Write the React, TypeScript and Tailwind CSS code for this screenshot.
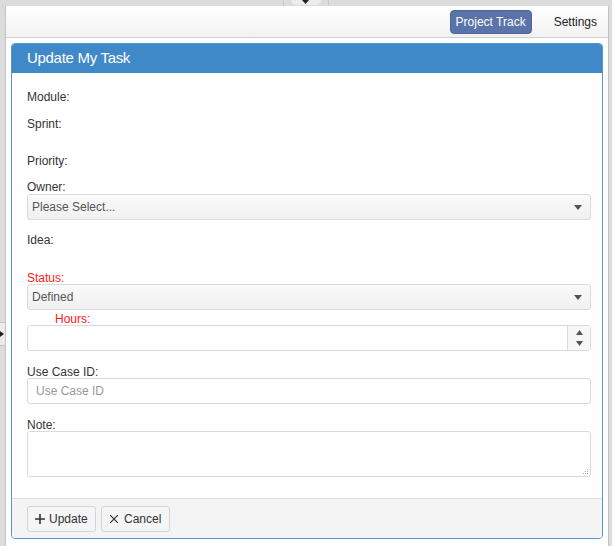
import React from 'react';

const Caret = () => (
    <svg width="8" height="5" viewBox="0 0 8 5" className="fill-[#4a5563]">
        <path d="M0 0h8L4 5z" />
    </svg>
);

const SelectBox = ({ value }: { value: string }) => (
    <div className="h-[26px] flex items-center justify-between pl-[4px] pr-[8px] border border-[#dadada] rounded-[3px] bg-gradient-to-b from-[#fafafa] to-[#f0f0f0] text-[#555]">
        <span>{value}</span>
        <Caret />
    </div>
);

const Label = ({ children, red, className = '' }: { children: React.ReactNode; red?: boolean; className?: string }) => (
    <div className={`h-[15px] ${red ? 'text-[#ff1a1a]' : 'text-[#333]'} ${className}`}>{children}</div>
);

const App = () => {
    return (
        <div
            className="w-[612px] h-[546px] bg-[#dcdcdc] flex flex-col text-[12px] overflow-hidden"
            style={{ fontFamily: '"Liberation Sans", Arial, sans-serif' }}
        >
            {/* top strip with tab */}
            <div className="h-[6px] flex justify-center">
                <div className="w-[46px] ml-[-1px] border-x border-[#c8c8c8] flex justify-center">
                    <div className="w-[30px] h-[5px] bg-[#ececec] rounded-b-[6px] flex justify-center">
                        <svg width="7" height="4" viewBox="0 0 7 4" className="fill-[#222]">
                            <path d="M0 0h7L3.5 4z" />
                        </svg>
                    </div>
                </div>
            </div>

            <div className="flex flex-1">
                {/* left gutter */}
                <div className="w-[6px] flex flex-col border-r border-[#c4c4c4]">
                    <div className="h-[316px]" />
                    <div className="h-[24px] bg-[#ebebeb] border-y border-[#c4c4c4] flex items-center">
                        <svg width="4" height="6" viewBox="0 0 4 6" className="fill-[#222]">
                            <path d="M0 0l4 3-4 3z" />
                        </svg>
                    </div>
                </div>

                {/* main */}
                <div className="flex-1 bg-white flex flex-col">
                    <div className="h-[32px] border-b border-[#cfcfcf] bg-gradient-to-b from-white to-[#f2f2f2] flex items-center justify-end pr-[11px]">
                        <div className="h-[24px] px-[5px] flex items-center rounded-[4px] bg-[#5a73a8] border border-[#4d669c] text-white">
                            Project Track
                        </div>
                        <div className="ml-[22px] text-[#222]">Settings</div>
                    </div>

                    <div className="mx-[5px] mt-[5px] border border-[#5896d0] rounded-[4px] overflow-hidden">
                        <div className="h-[29px] bg-[#3f89c9] flex items-center px-[15px] text-white text-[15px] tracking-[-0.3px]">
                            Update My Task
                        </div>
                        <div className="pl-[15px] pr-[11px] pt-[17px] pb-[21px]">
                            <Label className="leading-[15px]">Module:</Label>
                            <Label className="mt-[12px] leading-[15px]">Sprint:</Label>
                            <Label className="mt-[22px] leading-[15px]">Priority:</Label>
                            <Label className="mt-[10px] leading-[17px]">Owner:</Label>
                            <SelectBox value="Please Select..." />
                            <Label className="mt-[13px] leading-[15px]">Idea:</Label>
                            <Label red className="mt-[21px] leading-[19px]">Status:</Label>
                            <SelectBox value="Defined" />
                            <Label red className="ml-[28px] leading-[19px]">Hours:</Label>
                            <div className="h-[26px] border border-[#dadada] rounded-[3px] flex justify-end">
                                <div className="w-[23px] border-l border-[#dadada] bg-[#f7f7f7] flex flex-col items-center justify-center gap-[6px]">
                                    <svg width="7" height="5" viewBox="0 0 7 5" className="fill-[#4a5563]">
                                        <path d="M0 5h7L3.5 0z" />
                                    </svg>
                                    <svg width="7" height="5" viewBox="0 0 7 5" className="fill-[#4a5563]">
                                        <path d="M0 0h7L3.5 5z" />
                                    </svg>
                                </div>
                            </div>
                            <Label className="mt-[12px] leading-[18px]">Use Case ID:</Label>
                            <div className="h-[26px] border border-[#dadada] rounded-[3px] flex items-center pl-[8px] text-[#999]">
                                Use Case ID
                            </div>
                            <Label className="mt-[12px] leading-[18px]">Note:</Label>
                            <div className="h-[46px] border border-[#dadada] rounded-[3px] flex items-end justify-end p-[1px]">
                                <svg width="6" height="6" viewBox="0 0 6 6" className="fill-[#aaa]">
                                    <rect x="4" y="0" width="1" height="1" />
                                    <rect x="2" y="2" width="1" height="1" />
                                    <rect x="4" y="2" width="1" height="1" />
                                    <rect x="0" y="4" width="1" height="1" />
                                    <rect x="2" y="4" width="1" height="1" />
                                    <rect x="4" y="4" width="1" height="1" />
                                </svg>
                            </div>
                        </div>
                        <div className="border-t border-[#dcdcdc] bg-[#f4f4f4] px-[15px] pt-[7px] pb-[6px] flex gap-[5px]">
                            <button className="h-[26px] w-[69px] pl-[7px] flex items-center gap-[4px] border border-[#d4d4d4] rounded-[3px] bg-[#f5f5f5] text-[#333]">
                                <svg width="10" height="10" viewBox="0 0 10 10" className="stroke-[#333]" strokeWidth="1.6">
                                    <path d="M5 0v10M0 5h10" />
                                </svg>
                                Update
                            </button>
                            <button className="h-[26px] w-[69px] pl-[8px] flex items-center gap-[6px] border border-[#d4d4d4] rounded-[3px] bg-[#f5f5f5] text-[#333]">
                                <svg width="8" height="8" viewBox="0 0 8 8" className="stroke-[#333]" strokeWidth="1.2">
                                    <path d="M0 0l8 8M8 0L0 8" />
                                </svg>
                                Cancel
                            </button>
                        </div>
                    </div>
                </div>

                {/* right gutter */}
                <div className="w-[4px] border-l border-[#c4c4c4]" />
            </div>
        </div>
    );
};

export default App;
